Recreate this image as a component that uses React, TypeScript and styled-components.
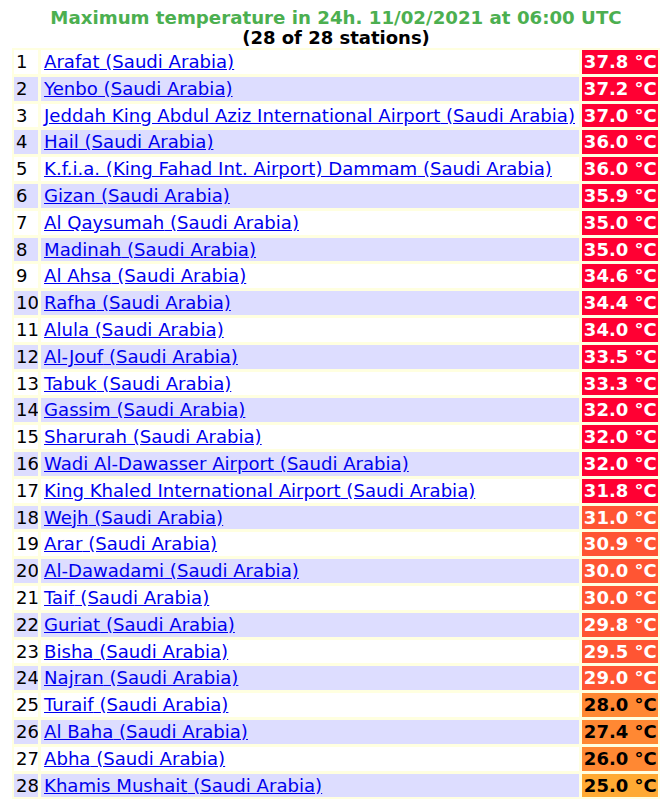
import React from "react";
import styled, { createGlobalStyle } from "styled-components";

const GlobalStyle = createGlobalStyle`
  body {
    margin: 8px;
    background: #ffffff;
    font-family: "DejaVu Sans", Verdana, sans-serif;
    font-size: 18px;
  }
`;

const Header = styled.div`
  text-align: center;
  font-weight: bold;
  line-height: 20px;
`;

const Title = styled.div`
  color: #4caf50;
  font-size: 18.2px;
`;

const Subtitle = styled.div`
  color: #000000;
`;

const Table = styled.table`
  width: 648px;
  margin: 0 auto;
  background: #ffffe0;
  border-spacing: 1px;
  table-layout: fixed;
`;

const Row = styled.tr<{ $alt: boolean }>`
  background: ${(p) => (p.$alt ? "#ddddff" : "#ffffff")};
`;

const Cell = styled.td`
  border: 1px solid #ffffe0;
  padding: 2px 2px 1px;
  line-height: 20.8px;
  white-space: nowrap;
  overflow: hidden;
  color: #000000;
`;

const NumCell = styled(Cell)`
  width: 20px;
`;

const NameCell = styled(Cell)`
  width: 532px;
  padding-left: 3px;
`;

const TempCell = styled(Cell)<{ $bg: string; $fg: string }>`
  width: 72px;
  background: ${(p) => p.$bg};
  color: ${(p) => p.$fg};
  font-weight: bold;
  text-align: center;
`;

const StationLink = styled.a`
  color: #0000ee;
  text-decoration: underline;
  font-size: 18.1px;
`;

const data: [string, number][] = [
  ["Arafat", 37.8],
  ["Yenbo", 37.2],
  ["Jeddah King Abdul Aziz International Airport", 37.0],
  ["Hail", 36.0],
  ["K.f.i.a. (King Fahad Int. Airport) Dammam", 36.0],
  ["Gizan", 35.9],
  ["Al Qaysumah", 35.0],
  ["Madinah", 35.0],
  ["Al Ahsa", 34.6],
  ["Rafha", 34.4],
  ["Alula", 34.0],
  ["Al-Jouf", 33.5],
  ["Tabuk", 33.3],
  ["Gassim", 32.0],
  ["Sharurah", 32.0],
  ["Wadi Al-Dawasser Airport", 32.0],
  ["King Khaled International Airport", 31.8],
  ["Wejh", 31.0],
  ["Arar", 30.9],
  ["Al-Dawadami", 30.0],
  ["Taif", 30.0],
  ["Guriat", 29.8],
  ["Bisha", 29.5],
  ["Najran", 29.0],
  ["Turaif", 28.0],
  ["Al Baha", 27.4],
  ["Abha", 26.0],
  ["Khamis Mushait", 25.0],
];

function tempColors(t: number): { bg: string; fg: string } {
  if (t >= 31.5) return { bg: "#ff0033", fg: "#ffffff" };
  if (t >= 29) return { bg: "#ff5533", fg: "#ffffff" };
  if (t >= 26) return { bg: "#ff8833", fg: "#000000" };
  return { bg: "#ffaa33", fg: "#000000" };
}

export default function App() {
  return (
    <>
      <GlobalStyle />
      <Header>
        <Title>Maximum temperature in 24h. 11/02/2021 at 06:00 UTC</Title>
        <Subtitle>(28 of 28 stations)</Subtitle>
      </Header>
      <Table>
        <tbody>
          {data.map(([name, t], i) => {
            const c = tempColors(t);
            return (
              <Row key={i} $alt={i % 2 === 1}>
                <NumCell>{i + 1}</NumCell>
                <NameCell>
                  <StationLink href="#">{name} (Saudi Arabia)</StationLink>
                </NameCell>
                <TempCell $bg={c.bg} $fg={c.fg}>
                  {t.toFixed(1)} °C
                </TempCell>
              </Row>
            );
          })}
        </tbody>
      </Table>
    </>
  );
}
